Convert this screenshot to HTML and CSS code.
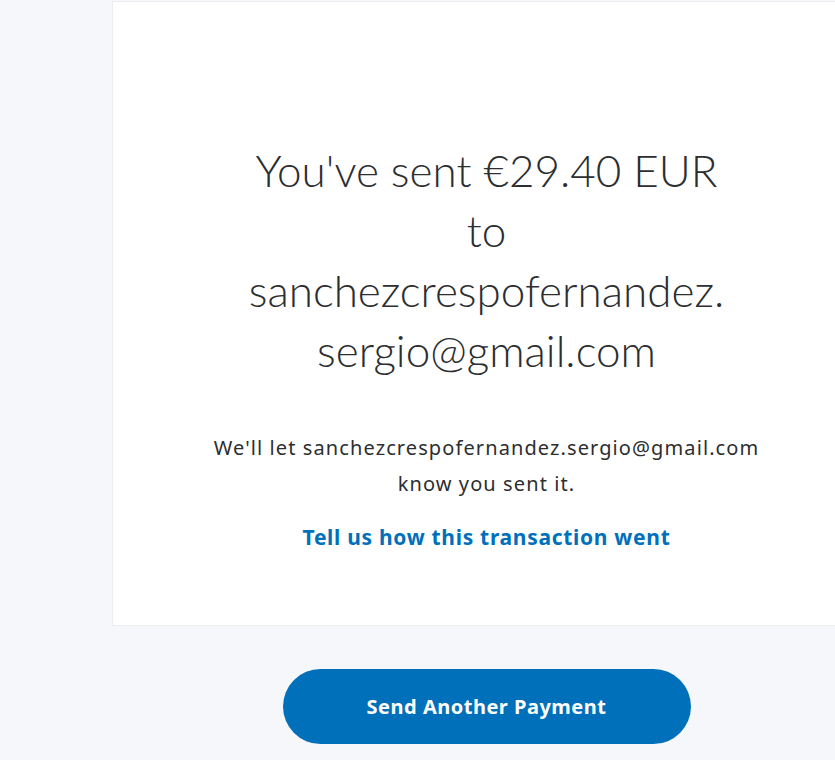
FILE: index.html
```html
<!DOCTYPE html>
<html lang="en">
<head>
<meta charset="utf-8">
<title>Payment sent</title>
<link rel="stylesheet" href="styles.css">
</head>
<body>
<div class="page">
  <main class="column">
    <section class="card">
      <h1 class="headline">You've sent €29.40 EUR<br>to<br>sanchezcrespofernandez.<br>sergio@gmail.com</h1>
      <p class="note">We'll let sanchezcrespofernandez.sergio@gmail.com<br>know you sent it.</p>
      <a class="feedback" href="#">Tell us how this transaction went</a>
    </section>
    <div class="actions">
      <a class="primary-btn" href="#">Send Another Payment</a>
    </div>
  </main>
</div>
</body>
</html>
```
FILE: styles.css
```css
html, body {
  margin: 0;
  padding: 0;
  background: #f5f7fa;
  overflow: hidden;
}
.page {
  width: 835px;
  height: 760px;
  overflow: hidden;
}
.column {
  margin-left: 112px;
  width: 749px;
  padding-top: 1px;
}
.card {
  background: #ffffff;
  border: 1px solid #eaeced;
  height: 625px;
  box-sizing: border-box;
  display: flex;
  flex-direction: column;
  align-items: center;
  padding-top: 138px;
}
.headline {
  margin: 0;
  font-family: Lato, "Liberation Sans", sans-serif;
  font-weight: 300;
  font-size: 44px;
  line-height: 60px;
  color: #2c2e2f;
  text-align: center;
}
.note {
  margin: 50px 0 0;
  font-family: "Noto Sans", sans-serif;
  font-size: 20px;
  letter-spacing: 1.1px;
  line-height: 36px;
  color: #2c2e2f;
  text-align: center;
}
.feedback {
  margin-top: 23px;
  font-family: "Noto Sans", sans-serif;
  font-weight: bold;
  font-size: 21px;
  letter-spacing: 0.7px;
  line-height: 24px;
  color: #0070ba;
  text-decoration: none;
}
.actions {
  display: flex;
  justify-content: center;
  padding-top: 43px;
}
.primary-btn {
  width: 408px;
  height: 75px;
  border-radius: 38px;
  background: #0070ba;
  color: #ffffff;
  font-family: "Noto Sans", sans-serif;
  font-weight: bold;
  font-size: 20px;
  letter-spacing: 0.5px;
  display: flex;
  align-items: center;
  justify-content: center;
  text-decoration: none;
}
```
